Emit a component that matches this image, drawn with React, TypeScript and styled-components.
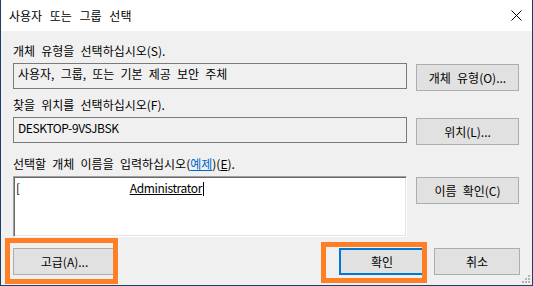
import React from "react";
import styled, { createGlobalStyle } from "styled-components";

const Global = createGlobalStyle`
  html, body { margin: 0; padding: 0; background: #ffffff; }
  body { font-family: "Noto Sans CJK KR", "Noto Sans", sans-serif; font-size: 12px; color: #000; word-spacing: 3.5px; }
`;

const Window = styled.div`
  position: relative;
  width: 533px;
  height: 286px;
  box-sizing: border-box;
  border: 1px solid #1b3f68;
  border-top: none;
  display: flex;
  flex-direction: column;
  background: #f0f0f0;
  overflow: hidden;
`;

const TitleBar = styled.div`
  height: 31px;
  flex: none;
  background: #ffffff;
  display: flex;
  align-items: center;
  justify-content: space-between;
  padding: 0 10px 0 8px;
`;

const TitleText = styled.span`
  font-size: 12px;
  line-height: 31px;
  color: #000;
  word-spacing: 5px;
`;

const CloseIcon = styled.svg`
  width: 11px;
  height: 11px;
  display: block;
`;

const Body = styled.div`
  flex: 1;
  display: flex;
  flex-direction: column;
  padding: 12px 12px 0 12px;
`;

const Label = styled.div<{ $gap: number }>`
  line-height: 16px;
  height: 16px;
  margin-top: ${(p) => p.$gap}px;
  margin-bottom: 4px;
  white-space: nowrap;
`;

const Link = styled.span`
  color: #0066cc;
  text-decoration: underline;
`;

const Mnemonic = styled.span`
  text-decoration: underline;
`;

const Row = styled.div`
  display: grid;
  grid-template-columns: 394px 103px;
  column-gap: 9px;
  align-items: start;
`;

const ReadOnlyBox = styled.div<{ $latin?: boolean }>`
  height: 26px;
  box-sizing: border-box;
  border: 1px solid #7a7a7a;
  background: #f0f0f0;
  padding: 2px 4px 0 4px;
  line-height: 16px;
  white-space: nowrap;
  letter-spacing: ${(p) => (p.$latin ? "-0.4px" : "0")};
`;

const NameArea = styled.div`
  height: 61px;
  box-sizing: border-box;
  background: #ffffff;
  border: 1px solid;
  border-color: #a0a0a0 #ffffff #ffffff #a0a0a0;
  box-shadow: inset 1px 1px 0 #696969, inset -1px -1px 0 #e3e3e3;
  padding: 3px 2px 0 2px;
  line-height: 16px;
  white-space: nowrap;
  letter-spacing: -0.35px;
`;

const NamePart = styled.span<{ $offset?: number }>`
  text-decoration: underline;
  margin-left: ${(p) => p.$offset ?? 0}px;
`;

const Caret = styled.span`
  display: inline-block;
  width: 1px;
  height: 14px;
  background: #000;
  vertical-align: -3px;
  margin-left: 1px;
`;

const Button = styled.button<{ $width?: number; $focused?: boolean }>`
  width: ${(p) => p.$width ?? 103}px;
  height: 27px;
  margin-top: 1px;
  box-sizing: border-box;
  border: ${(p) => (p.$focused ? "2px solid #0078d7" : "1px solid #adadad")};
  background: #e1e1e1;
  font-family: "Noto Sans CJK KR", "Noto Sans", sans-serif;
  font-size: 12px;
  color: #000;
  padding: 0;
  line-height: 16px;
  white-space: nowrap;
  word-spacing: 3.5px;
`;

const Footer = styled.div`
  display: flex;
  align-items: center;
  margin-top: 10px;
`;

const Spacer = styled.div`
  flex: 1;
`;

const ButtonGroup = styled.div`
  display: flex;
  gap: 9px;
`;

const Highlight = styled.div<{ $x: number; $y: number; $w: number; $h: number }>`
  position: absolute;
  left: ${(p) => p.$x}px;
  top: ${(p) => p.$y}px;
  width: ${(p) => p.$w}px;
  height: ${(p) => p.$h}px;
  box-sizing: border-box;
  border: 5px solid #ff7f27;
  pointer-events: none;
`;

const Grip = styled.svg`
  position: absolute;
  right: 1px;
  bottom: 1px;
  width: 11px;
  height: 11px;
`;

export default function App() {
  return (
    <>
      <Global />
      <Window>
        <TitleBar>
          <TitleText>사용자 또는 그룹 선택</TitleText>
          <CloseIcon viewBox="0 0 11 11">
            <path d="M0.5 0.5 L10.5 10.5 M10.5 0.5 L0.5 10.5" stroke="#000" strokeWidth="1" fill="none" />
          </CloseIcon>
        </TitleBar>
        <Body>
          <Label $gap={0}>개체 유형을 선택하십시오(S).</Label>
          <Row>
            <ReadOnlyBox>사용자, 그룹, 또는 기본 제공 보안 주체</ReadOnlyBox>
            <Button>개체 유형(O)...</Button>
          </Row>
          <Label $gap={6}>찾을 위치를 선택하십시오(F).</Label>
          <Row>
            <ReadOnlyBox $latin>DESKTOP-9VSJBSK</ReadOnlyBox>
            <Button>위치(L)...</Button>
          </Row>
          <Label $gap={11}>
            선택할 개체 이름을 입력하십시오(<Link>예제</Link>)(<Mnemonic>E</Mnemonic>).
          </Label>
          <Row>
            <NameArea>
              <NamePart>[</NamePart>
              <NamePart $offset={110}>Administrator</NamePart>
              <Caret />
            </NameArea>
            <Button>이름 확인(C)</Button>
          </Row>
          <Footer>
            <Button>고급(A)...</Button>
            <Spacer />
            <ButtonGroup>
              <Button $width={86} $focused>확인</Button>
              <Button $width={86}>취소</Button>
            </ButtonGroup>
          </Footer>
        </Body>
        <Highlight $x={4} $y={238} $w={113} $h={46} />
        <Highlight $x={320} $y={242} $w={106} $h={41} />
        <Grip viewBox="0 0 11 11">
          <rect x="8" y="2" width="2" height="2" fill="#b4b4b4" />
          <rect x="5" y="5" width="2" height="2" fill="#b4b4b4" />
          <rect x="8" y="5" width="2" height="2" fill="#b4b4b4" />
          <rect x="2" y="8" width="2" height="2" fill="#b4b4b4" />
          <rect x="5" y="8" width="2" height="2" fill="#b4b4b4" />
          <rect x="8" y="8" width="2" height="2" fill="#b4b4b4" />
        </Grip>
      </Window>
    </>
  );
}
